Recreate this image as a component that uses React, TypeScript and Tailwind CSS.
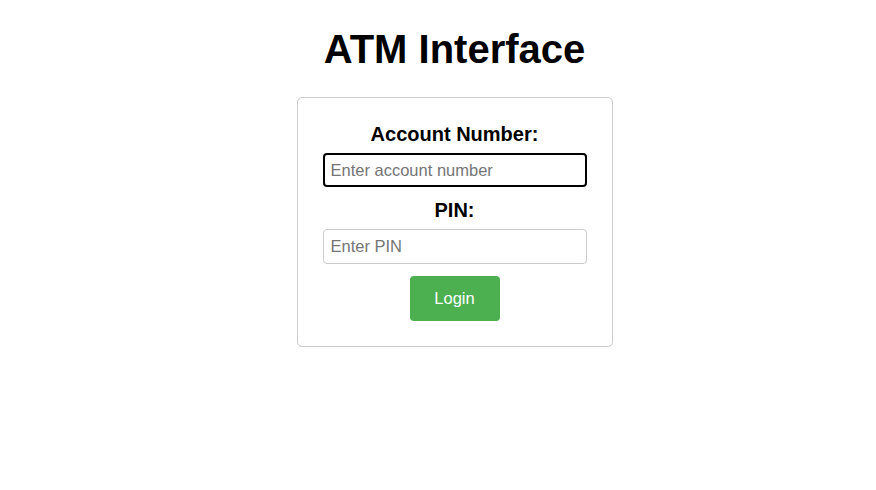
import { useState } from "react";

export default function App() {
    const [account, setAccount] = useState("")
    const [pin, setPin] = useState("")

    return (
        <div className="min-h-[490px] bg-white flex flex-col items-center pl-[33px] text-black" style={{ fontFamily: '"Liberation Sans", Arial, sans-serif' }}>
            <h1 className="mt-[26px] mb-[25px] text-[40px] leading-[46px] font-bold">ATM Interface</h1>

            <form className="w-[316px] border border-[#ccc] rounded-[5px] px-[25px] pt-[25px] pb-[25px] flex flex-col items-center" onSubmit={e => e.preventDefault()}>
                <label htmlFor="account" className="text-[20px] leading-[23px] font-bold mb-[7px]">Account Number:</label>
                <input
                    id="account"
                    autoFocus
                    value={account}
                    onChange={e => setAccount(e.target.value)}
                    placeholder="Enter account number"
                    className="w-[264px] h-[34px] border-2 border-black rounded-[4px] px-[6px] text-[16.5px] outline-none placeholder:text-[#757575] mb-3"
                />

                <label htmlFor="pin" className="text-[20px] leading-[23px] font-bold mb-[7px]">PIN:</label>
                <input
                    id="pin"
                    type="password"
                    value={pin}
                    onChange={e => setPin(e.target.value)}
                    placeholder="Enter PIN"
                    className="w-[264px] h-[35px] border border-[#ccc] rounded-[4px] px-[7px] text-[16.5px] outline-none placeholder:text-[#757575] mb-3"
                />

                <button type="submit" className="w-[90px] h-[45px] rounded-[4px] bg-[#4caf50] text-white text-[16.5px]">Login</button>
            </form>
        </div>
    )
}
